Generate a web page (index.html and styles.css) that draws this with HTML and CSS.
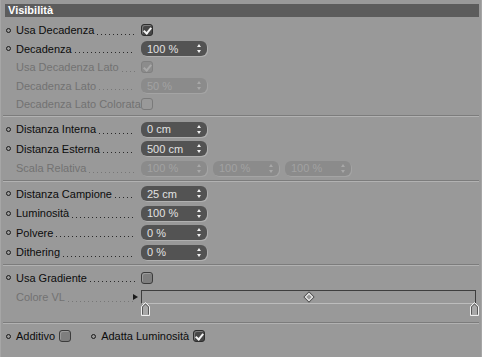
FILE: index.html
```html
<!DOCTYPE html>
<html>
  <head>
    <title>Visibilità</title>
    <meta charset="utf-8" />
    <link rel="stylesheet" href="styles.css">
  </head>
  <body>
    <div class="panel">
      <div class="head">Visibilità</div>

      <div class="group g1">
        <div class="row">
          <div class="name"><i class="bullet"></i>Usa Decadenza<span class="lead"></span></div>
          <span class="check on"></span>
        </div>
        <div class="row">
          <div class="name"><i class="bullet"></i>Decadenza<span class="lead"></span></div>
          <span class="field">100 %<b class="spin"></b></span>
        </div>
        <div class="row off">
          <div class="name"><i class="bullet"></i>Usa Decadenza Lato<span class="lead"></span></div>
          <span class="check on"></span>
        </div>
        <div class="row off">
          <div class="name"><i class="bullet"></i>Decadenza Lato<span class="lead"></span></div>
          <span class="field">50 %<b class="spin"></b></span>
        </div>
        <div class="row off">
          <div class="name"><i class="bullet"></i>Decadenza Lato Colorata</div>
          <span class="check"></span>
        </div>
      </div>

      <div class="group g2">
        <div class="row">
          <div class="name"><i class="bullet"></i>Distanza Interna<span class="lead"></span></div>
          <span class="field">0 cm<b class="spin"></b></span>
        </div>
        <div class="row">
          <div class="name"><i class="bullet"></i>Distanza Esterna<span class="lead"></span></div>
          <span class="field">500 cm<b class="spin"></b></span>
        </div>
        <div class="row off">
          <div class="name"><i class="bullet"></i>Scala Relativa<span class="lead"></span></div>
          <div class="fields">
            <span class="field">100 %<b class="spin"></b></span>
            <span class="field">100 %<b class="spin"></b></span>
            <span class="field">100 %<b class="spin"></b></span>
          </div>
        </div>
      </div>

      <div class="group g3">
        <div class="row">
          <div class="name"><i class="bullet"></i>Distanza Campione<span class="lead"></span></div>
          <span class="field">25 cm<b class="spin"></b></span>
        </div>
        <div class="row">
          <div class="name"><i class="bullet"></i>Luminosità<span class="lead"></span></div>
          <span class="field">100 %<b class="spin"></b></span>
        </div>
        <div class="row">
          <div class="name"><i class="bullet"></i>Polvere<span class="lead"></span></div>
          <span class="field">0 %<b class="spin"></b></span>
        </div>
        <div class="row">
          <div class="name"><i class="bullet"></i>Dithering<span class="lead"></span></div>
          <span class="field">0 %<b class="spin"></b></span>
        </div>
      </div>

      <div class="group g4">
        <div class="row">
          <div class="name"><i class="bullet"></i>Usa Gradiente<span class="lead"></span></div>
          <span class="check"></span>
        </div>
        <div class="row off grad-row">
          <div class="name"><i class="bullet"></i>Colore VL<span class="lead"></span></div>
          <div class="gradient">
            <span class="arrow"></span>
            <div class="grad-box">
              <span class="diamond"></span>
              <svg class="knob knob-left" width="9" height="14" viewBox="0 0 9 14">
                <path d="M0.5 13.5 V4.5 L4.5 0.5 L8.5 4.5 V13.5 Z" fill="#a8a8a8" stroke="#f0f0f0" />
                <path d="M1.5 12.5 V5 L4.5 2 L7.5 5 V12.5" fill="none" stroke="#5a5a5a" />
              </svg>
              <svg class="knob knob-right" width="9" height="14" viewBox="0 0 9 14">
                <path d="M0.5 13.5 V4.5 L4.5 0.5 L8.5 4.5 V13.5 Z" fill="#a8a8a8" stroke="#f0f0f0" />
                <path d="M1.5 12.5 V5 L4.5 2 L7.5 5 V12.5" fill="none" stroke="#5a5a5a" />
              </svg>
            </div>
          </div>
        </div>
      </div>

      <div class="group g5">
        <div class="row">
          <div class="pair"><i class="bullet"></i>Additivo<span class="check"></span></div>
          <div class="pair"><i class="bullet"></i>Adatta Luminosità<span class="check on"></span></div>
        </div>
      </div>
    </div>
  </body>
</html>
```

FILE: styles.css
```css
* {
  box-sizing: border-box;
}
html,
body {
  margin: 0;
  background: #999999;
  font-family: "Liberation Sans", Arial, sans-serif;
  font-size: 11px;
  color: #0c0c0c;
}
.panel {
  width: 482px;
  height: 357px;
  padding: 4px 2px 0 4px;
  border-left: 1px solid #a6a6a6;
  border-right: 1px solid #a6a6a6;
}
.head {
  height: 13px;
  line-height: 13px;
  background: #5c5c5c;
  color: #ffffff;
  font-weight: bold;
  padding-left: 3px;
}

.group {
  border-bottom: 1px solid #7c7c7c;
  box-shadow: 0 1px 0 #b2b2b2;
  margin-left: -2px;
  padding-left: 2px;
}
.g1 {
  padding-top: 4px;
  padding-bottom: 1px;
}
.g2 {
  padding-top: 4px;
  padding-bottom: 2px;
}
.g3 {
  padding-top: 3px;
  padding-bottom: 2px;
}
.g4 {
  padding-top: 3px;
  padding-bottom: 15px;
}
.g5 {
  border: 0;
  box-shadow: none;
  padding-top: 4px;
}
.g1 .row {
  height: 18.5px;
}

.row {
  display: flex;
  align-items: center;
  height: 19.5px;
}
.name {
  display: flex;
  align-items: center;
  width: 136px;
  white-space: nowrap;
}
.bullet {
  display: inline-block;
  width: 5px;
  height: 5px;
  border: 1px solid #1a1a1a;
  border-radius: 50%;
  margin: 0 5px 0 1px;
}
.lead {
  flex: 1;
  height: 1px;
  margin: 8px 6px 0 3px;
  background-image: linear-gradient(to right, #2a2a2a 1px, transparent 1px);
  background-size: 4px 1px;
  background-repeat: repeat-x;
}
.off {
  color: #727272;
}
.off .bullet {
  visibility: hidden;
}
.off .lead {
  background-image: linear-gradient(to right, #777777 1px, transparent 1px);
}

.check {
  display: inline-block;
  position: relative;
  width: 12px;
  height: 12px;
  border: 1px solid #3c3c3c;
  border-radius: 3px;
  background: #7e7e7e;
  box-shadow: inset 1px 1px 0 #9a9a9a;
}
.check.on {
  background: #474747;
  border-color: #2e2e2e;
  box-shadow: inset 1px 1px 0 #7a7a7a;
}
.check.on::after {
  content: "";
  position: absolute;
  left: 3px;
  top: 1px;
  width: 3px;
  height: 6px;
  border-right: 2px solid #f4f4f4;
  border-bottom: 2px solid #f4f4f4;
  transform: rotate(40deg);
}
.off .check {
  background: #999999;
  border-color: #7a7a7a;
  box-shadow: none;
}
.off .check.on {
  background: #8c8c8c;
  border-color: #808080;
}
.off .check.on::after {
  border-color: #a8a8a8;
}

.field {
  display: inline-flex;
  align-items: center;
  position: relative;
  width: 66px;
  height: 15px;
  padding-left: 6px;
  border-radius: 6px;
  background: #535353;
  color: #e2e2e2;
  box-shadow: 1px 1px 0 #b0b0b0;
}
.spin {
  position: absolute;
  right: 5px;
  top: 3px;
  width: 5px;
  height: 9px;
}
.spin::before,
.spin::after {
  content: "";
  position: absolute;
  left: 0;
  border-left: 2.5px solid transparent;
  border-right: 2.5px solid transparent;
}
.spin::before {
  top: 0;
  border-bottom: 3px solid #f0f0f0;
}
.spin::after {
  bottom: 0;
  border-top: 3px solid #f0f0f0;
}
.off .field {
  background: #8b8b8b;
  color: #a2a2a2;
  box-shadow: 1px 1px 0 #a4a4a4;
}
.off .spin::before {
  border-bottom-color: #a8a8a8;
}
.off .spin::after {
  border-top-color: #a8a8a8;
}
.fields {
  display: flex;
  gap: 6px;
}

.grad-row {
  height: 19px;
}
.gradient {
  display: flex;
  align-items: center;
  flex: 1;
  margin-left: -8px;
}
.arrow {
  width: 0;
  height: 0;
  border-top: 3.5px solid transparent;
  border-bottom: 3.5px solid transparent;
  border-left: 5px solid #1a1a1a;
  margin-right: 3px;
}
.grad-box {
  position: relative;
  flex: 1;
  height: 14px;
  margin-right: 3px;
  border-top: 1px solid #3e3e3e;
  border-left: 1px solid #3e3e3e;
  border-right: 1px solid #3e3e3e;
  border-bottom: 1px solid #bdbdbd;
}
.diamond {
  position: absolute;
  left: 164px;
  top: 3px;
  width: 6px;
  height: 6px;
  border: 1px solid #f2f2f2;
  box-shadow: 0 0 0 1px #555555;
  transform: rotate(45deg);
}
.knob {
  position: absolute;
  top: 11px;
}
.knob-left {
  left: -1px;
}
.knob-right {
  right: -4px;
}

.pair {
  display: flex;
  align-items: center;
  margin-right: 19px;
}
.pair .check {
  margin-left: 4px;
}
```
